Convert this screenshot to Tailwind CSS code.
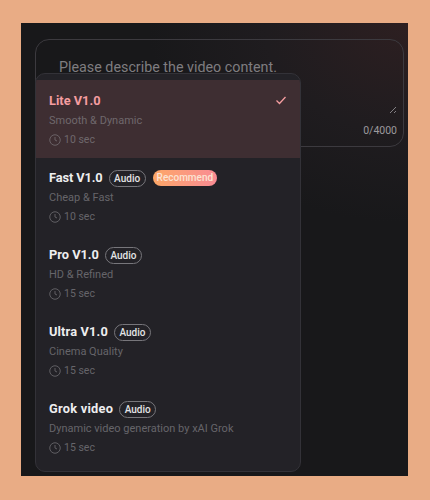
<!DOCTYPE html>
<html lang="en">
<head>
    <meta charset="UTF-8">
    <meta name="viewport" content="width=device-width, initial-scale=1.0">
    <title>Video model select</title>
    <script src="https://cdn.jsdelivr.net/npm/@tailwindcss/browser@4"></script>
</head>
<body class="w-[430px] h-[500px] overflow-hidden bg-[#e9ac85] font-['Roboto',sans-serif]">

<div class="pt-[23px] pl-[21px]">
    <!-- Dark panel -->
    <div class="relative w-[387px] h-[453px] pt-[16px] pl-[14px] bg-[radial-gradient(ellipse_260px_200px_at_100%_0%,#2d1f21,#1f1c1f_55%,#18181a_100%)]">

        <!-- Prompt box -->
        <div class="relative w-[369px] h-[108px] rounded-[14px] border border-[#3c3a3f] pt-[17px] pl-[23px]">
            <p class="text-[14.3px] leading-[20px] text-[#7f7d80]">Please describe the video content.</p>
            <svg class="absolute right-[6px] bottom-[32px] w-[8px] h-[8px]" viewBox="0 0 8 8" fill="none" stroke="#8d8b8e" stroke-width="0.9"><path d="M1 7 7 1M5 7l2-2"/></svg>
            <span class="absolute right-[6px] bottom-[8px] text-[10.5px] leading-[14px] text-[#9c9a9d]">0/4000</span>
        </div>

        <!-- Model dropdown -->
        <div class="absolute left-[14px] top-[50px] w-[266px] h-[399px] pt-[6px] rounded-[10px] border border-[#333238] bg-[#232227] overflow-hidden">

            <div class="relative h-[78px] pt-[12px] pl-[13px] bg-[#3e2e32]">
                <div class="flex items-center h-[18px] gap-[6px]">
                    <span class="text-[12.8px] font-bold text-[#f59da0]">Lite V1.0</span>
                </div>
                <p class="mt-[3px] h-[16px] text-[11px] leading-[16px] text-[#6f686c]">Smooth &amp; Dynamic</p>
                <div class="mt-[3px] flex items-center gap-[3px] h-[16px] text-[10.5px] text-[#6f686c]">
                    <svg class="w-[12px] h-[12px]" viewBox="0 0 24 24" fill="none" stroke="currentColor" stroke-width="1.8"><circle cx="12" cy="12" r="10.5"/><path d="M12 6v6l4 2"/></svg>
                    <span>10 sec</span>
                </div>
                <svg class="absolute right-[13px] top-[14px] w-[12px] h-[12px]" viewBox="0 0 12 12" fill="none" stroke="#f59da0" stroke-width="1.3"><path d="M1.5 6.5 4.5 9.5 10.5 3"/></svg>
            </div>

            <div class="h-[77px] pt-[11px] pl-[13px]">
                <div class="flex items-center h-[18px] gap-[6px]">
                    <span class="text-[12.8px] font-bold tracking-[-0.1px] text-[#eeeeef]">Fast V1.0</span>
                    <span class="h-[17px] px-[4.5px] rounded-full border border-[#77767b] text-[10px] leading-[15px] font-medium text-[#e4e4e5]">Audio</span>
                    <span class="ml-[1px] h-[16px] px-[4px] rounded-full bg-gradient-to-r from-[#fda766] to-[#f98b93] text-[10px] leading-[16px] font-medium text-[#fbe3d3]">Recommend</span>
                </div>
                <p class="mt-[3px] h-[16px] text-[11px] leading-[16px] text-[#66656a]">Cheap &amp; Fast</p>
                <div class="mt-[3px] flex items-center gap-[3px] h-[16px] text-[10.5px] text-[#66656a]">
                    <svg class="w-[12px] h-[12px]" viewBox="0 0 24 24" fill="none" stroke="currentColor" stroke-width="1.8"><circle cx="12" cy="12" r="10.5"/><path d="M12 6v6l4 2"/></svg>
                    <span>10 sec</span>
                </div>
            </div>

            <div class="h-[77px] pt-[11px] pl-[13px]">
                <div class="flex items-center h-[18px] gap-[6px]">
                    <span class="text-[12.8px] font-bold text-[#eeeeef]">Pro V1.0</span>
                    <span class="h-[17px] px-[4.5px] rounded-full border border-[#77767b] text-[10px] leading-[15px] font-medium text-[#e4e4e5]">Audio</span>
                </div>
                <p class="mt-[3px] h-[16px] text-[11px] leading-[16px] text-[#66656a]">HD &amp; Refined</p>
                <div class="mt-[3px] flex items-center gap-[3px] h-[16px] text-[10.5px] text-[#66656a]">
                    <svg class="w-[12px] h-[12px]" viewBox="0 0 24 24" fill="none" stroke="currentColor" stroke-width="1.8"><circle cx="12" cy="12" r="10.5"/><path d="M12 6v6l4 2"/></svg>
                    <span>15 sec</span>
                </div>
            </div>

            <div class="h-[77px] pt-[11px] pl-[13px]">
                <div class="flex items-center h-[18px] gap-[6px]">
                    <span class="text-[12.8px] font-bold tracking-[0.15px] text-[#eeeeef]">Ultra V1.0</span>
                    <span class="h-[17px] px-[4.5px] rounded-full border border-[#77767b] text-[10px] leading-[15px] font-medium text-[#e4e4e5]">Audio</span>
                </div>
                <p class="mt-[3px] h-[16px] text-[11px] leading-[16px] text-[#66656a]">Cinema Quality</p>
                <div class="mt-[3px] flex items-center gap-[3px] h-[16px] text-[10.5px] text-[#66656a]">
                    <svg class="w-[12px] h-[12px]" viewBox="0 0 24 24" fill="none" stroke="currentColor" stroke-width="1.8"><circle cx="12" cy="12" r="10.5"/><path d="M12 6v6l4 2"/></svg>
                    <span>15 sec</span>
                </div>
            </div>

            <div class="h-[77px] pt-[11px] pl-[13px]">
                <div class="flex items-center h-[18px] gap-[6px]">
                    <span class="text-[12.8px] font-bold tracking-[0.25px] text-[#eeeeef]">Grok video</span>
                    <span class="h-[17px] px-[4.5px] rounded-full border border-[#77767b] text-[10px] leading-[15px] font-medium text-[#e4e4e5]">Audio</span>
                </div>
                <p class="mt-[3px] h-[16px] text-[11px] leading-[16px] text-[#66656a]">Dynamic video generation by xAI Grok</p>
                <div class="mt-[3px] flex items-center gap-[3px] h-[16px] text-[10.5px] text-[#66656a]">
                    <svg class="w-[12px] h-[12px]" viewBox="0 0 24 24" fill="none" stroke="currentColor" stroke-width="1.8"><circle cx="12" cy="12" r="10.5"/><path d="M12 6v6l4 2"/></svg>
                    <span>15 sec</span>
                </div>
            </div>
        </div>
    </div>
</div>

</body>
</html>
